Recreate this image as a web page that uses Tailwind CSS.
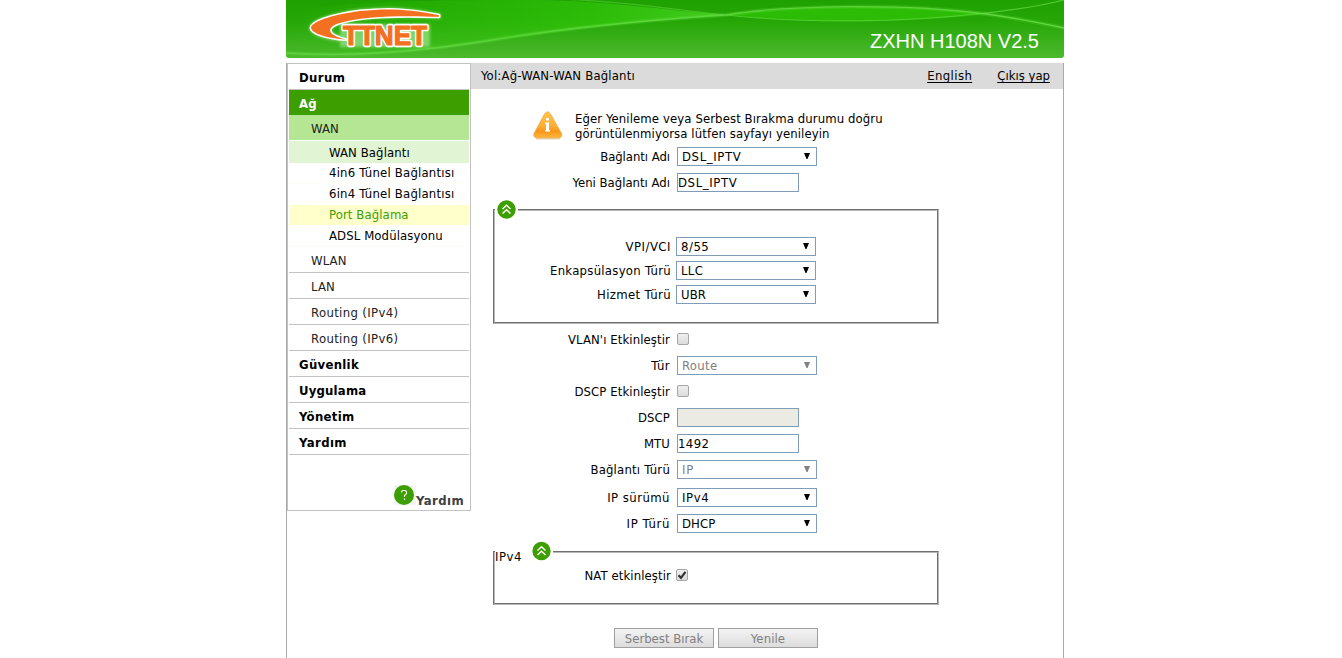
<!DOCTYPE html>
<html lang="tr">
<head>
  <meta charset="UTF-8">
  <meta name="viewport" content="width=device-width, initial-scale=1.0">
  <title>ZXHN H108N V2.5</title>
  <script src="https://cdn.jsdelivr.net/npm/@tailwindcss/browser@4"></script>
</head>
<body class="bg-white text-black font-['DejaVu_Sans_Condensed','DejaVu_Sans',sans-serif] text-[13px] leading-[15px] tracking-[0.1px] h-[658px] overflow-hidden">
  <div class="w-[778px] ml-[286px]">

    <!-- Header -->
    <header class="relative h-[58px] rounded-b-[3px] overflow-hidden">
      <svg class="absolute inset-0" width="778" height="58" viewBox="0 0 778 58">
        <defs>
          <linearGradient id="bg" x1="0" y1="0" x2="0" y2="1">
            <stop offset="0" stop-color="#1fa101"/>
            <stop offset="0.35" stop-color="#25a606"/>
            <stop offset="1" stop-color="#4cb92d"/>
          </linearGradient>
          <linearGradient id="glow" x1="0" y1="0" x2="1" y2="0">
            <stop offset="0" stop-color="#2fc808" stop-opacity="0"/>
            <stop offset="0.7" stop-color="#33cc0a" stop-opacity="0.8"/>
            <stop offset="1" stop-color="#4fda2a"/>
          </linearGradient>
          <linearGradient id="line" x1="0" y1="0" x2="1" y2="0">
            <stop offset="0" stop-color="#6be04a" stop-opacity="0.5"/>
            <stop offset="1" stop-color="#6be04a" stop-opacity="0.8"/>
          </linearGradient>
          <filter id="soft" x="-20%" y="-30%" width="140%" height="160%"><feGaussianBlur stdDeviation="1.6"/></filter>
        </defs>
        <rect width="778" height="58" fill="url(#bg)"/>
        <path d="M0 10C80 0 180 0 250 0C320 1 380 10 440 15C330 22 260 34 200 42C130 52 60 57 0 53Z" fill="url(#glow)" opacity="0.75"/>
        <path d="M440 15C500 5 640 4 700 14C640 22 520 25 440 15Z" fill="#2fc206" opacity="0.8"/>
        <g fill="none">
          <path d="M0 53C60 57 130 52 200 41C270 29 350 21 440 15C500 5 620 3 700 14C730 18 750 22 778 28" stroke="#7cf05a" stroke-width="4" opacity="0.18"/>
          <path d="M0 53C60 57 130 52 200 41C270 29 350 21 440 15C500 5 620 3 700 14C730 18 750 22 778 28" stroke="url(#line)" stroke-width="1.3"/>
          <path d="M270 -1C340 1 390 10 440 15C520 24 620 22 690 14C730 10 755 6 778 0" stroke="url(#line)" stroke-width="1.2" opacity="0.8"/>
        </g>

        <!-- Logo -->
        <g fill="#d8ffc8" stroke="#d8ffc8" stroke-width="4" filter="url(#soft)" opacity="0.45">
          <path d="M153 15.2C120 8.500 100 8.500 74 11C44 15 25 22 25 28C26 33 38 38 58 39.6C40 34 40 27 52 23C76 15 120 15 153 16.800Z"/>
          <path d="M56 26H142V45H56Z"/>
        </g>
        <path d="M153 15.2C120 8.500 100 8.500 74 11C44 15 25 22 25 28C26 33 38 38 60 39.6C41 35 40 28 52 23.500C76 15.500 120 15.500 153 16.800Z" fill="#f37021" stroke="#fff" stroke-width="3" paint-order="stroke" stroke-linejoin="round"/>
        <g font-family="Liberation Sans, sans-serif" font-weight="bold" font-size="28" letter-spacing="0" stroke-linejoin="round">
          <text x="57" y="45" textLength="84" lengthAdjust="spacingAndGlyphs" fill="#fff" stroke="#fff" stroke-width="4.500">TTNET</text>
          <text x="57" y="45" textLength="84" lengthAdjust="spacingAndGlyphs" fill="#f37021" stroke="#f37021" stroke-width="1.200">TTNET</text>
        </g>
      </svg>
      <div class="relative flex justify-end pr-[25px] pt-[29px] font-['Liberation_Sans',sans-serif] text-[20px] leading-[24px] tracking-normal text-white">ZXHN H108N V2.5</div>
    </header>

    <div class="mt-[5px] flex h-[600px] border-x border-[#a9a9a9]">

      <!-- Menu -->
      <nav class="w-[184px] h-[448px] shrink-0 border border-[#c3c3c3] pl-px pr-px flex flex-col">
        <a class="h-[26px] pl-[10px] pt-[6px] border-b border-[#c3c3c3] font-bold tracking-[0.4px]">Durum</a>
        <a class="h-[25px] pl-[10px] pt-[6px] bg-[#3d9e00] text-white font-bold">Ağ</a>
        <a class="h-[25px] pl-[22px] pt-[6px] bg-[#b5e693] text-[#222]">WAN</a>
        <a class="mt-px h-[22px] pl-[40px] pt-[4px] bg-[#e1f4d4]">WAN Bağlantı</a>
        <a class="h-[21px] pl-[40px] pt-[2px] border-b border-[#fdfdf3] tracking-[0.2px]">4in6 Tünel Bağlantısı</a>
        <a class="h-[21px] pl-[40px] pt-[2px] tracking-[0.2px]">6in4 Tünel Bağlantısı</a>
        <a class="h-[20px] pl-[40px] pt-[2px] bg-[#ffffcc] text-[#3d9e00]">Port Bağlama</a>
        <a class="h-[22px] pl-[40px] pt-[3px] border-b border-[#fdfdf3]">ADSL Modülasyonu</a>
        <a class="h-[26px] pl-[22px] pt-[6px] border-b border-[#c3c3c3] text-[#222]">WLAN</a>
        <a class="h-[26px] pl-[22px] pt-[6px] border-b border-[#c3c3c3] text-[#222]">LAN</a>
        <a class="h-[26px] pl-[22px] pt-[6px] border-b border-[#c3c3c3] text-[#222] tracking-[0.35px]">Routing (IPv4)</a>
        <a class="h-[26px] pl-[22px] pt-[6px] border-b border-[#c3c3c3] text-[#222] tracking-[0.35px]">Routing (IPv6)</a>
        <a class="h-[26px] pl-[10px] pt-[6px] border-b border-[#c3c3c3] font-bold tracking-[0.3px]">Güvenlik</a>
        <a class="h-[26px] pl-[10px] pt-[6px] border-b border-[#c3c3c3] font-bold tracking-[0.2px]">Uygulama</a>
        <a class="h-[26px] pl-[10px] pt-[6px] border-b border-[#c3c3c3] font-bold tracking-[0.3px]">Yönetim</a>
        <a class="h-[26px] pl-[10px] pt-[6px] border-b border-[#c3c3c3] font-bold tracking-[0.4px]">Yardım</a>
        <div class="mt-[30px] pr-[5px] flex justify-end">
          <span class="w-[22px] h-[20px] bg-[#f5f5f5]">
            <svg width="20" height="20" viewBox="0 0 20 20">
              <circle cx="10" cy="10" r="10" fill="#3d9e00"/>
              <path d="M7.500 7.500V6.500L8.500 5.500H11.500L12.500 6.500V8.500L10.500 10.500V12M10.500 13.500V15" fill="none" stroke="#fff" stroke-width="1.100"/>
            </svg>
          </span>
          <span class="pt-[8px] font-bold text-[#404040] tracking-[0.4px]">Yardım</span>
        </div>
      </nav>

      <!-- Content -->
      <main class="flex-1">
        <div class="h-[26px] pl-[10px] pr-[13px] pt-[5px] bg-[#dbdbdb] flex">
          <span class="flex-1 tracking-[0.18px]">Yol:Ağ-WAN-WAN Bağlantı</span>
          <a class="underline underline-offset-2 decoration-1 [text-decoration-skip-ink:none] mr-[25px] tracking-[0.4px]">English</a>
          <a class="underline underline-offset-2 decoration-1 [text-decoration-skip-ink:none] tracking-normal">Çıkış yap</a>
        </div>

        <div class="mt-[22px] pl-[62px] flex h-[30px]">
          <svg width="30" height="30" viewBox="0 0 30 30">
            <defs>
              <linearGradient id="warn" x1="0" y1="0" x2="0" y2="1">
                <stop offset="0" stop-color="#ffc54a"/>
                <stop offset="0.55" stop-color="#fdae33"/>
                <stop offset="0.75" stop-color="#f8961c"/>
                <stop offset="1" stop-color="#ffb53a"/>
              </linearGradient>
            </defs>
            <path d="M4 27.500H26" stroke="#e6d3bb" stroke-width="2" stroke-linecap="round"/>
            <path d="M11.500 3Q14.500 -1.500 17.500 3L28.500 22.500Q29.500 26.500 26 26.800H3.500Q0 26.500 1 22.500Z" fill="url(#warn)" stroke="#f5a030" stroke-width="0.700"/>
            <path d="M13 7H16V9.500H13ZM12 11.500H16V19H17V20.500H12V19H13V13H12Z" fill="#fff"/>
          </svg>
          <p class="ml-[12px]">Eğer Yenileme veya Serbest Bırakma durumu doğru<br>görüntülenmiyorsa lütfen sayfayı yenileyin</p>
        </div>

        <div class="mt-[6px] flex flex-col gap-[7px]">
          <div class="flex h-[19px] items-center">
            <label class="w-[199px] mr-[7px] text-right tracking-[-0.05px]">Bağlantı Adı</label>
            <div class="w-[140px] h-[19px] pl-[4px] pr-[6px] border border-[#7f9db9] flex items-center justify-between"><span class="tracking-[0.6px]">DSL_IPTV</span><svg class="mb-px" width="6" height="6"><path d="M0 0H6L3.500 6H2.500Z"/></svg></div>
          </div>
          <div class="flex h-[19px] items-center">
            <label class="w-[199px] mr-[7px] text-right tracking-normal">Yeni Bağlantı Adı</label>
            <input class="w-[122px] h-[19px] border border-[#7f9db9] tracking-[0.6px]" value="DSL_IPTV">
          </div>
        </div>

        <section class="relative mt-[17px] ml-[22px] w-[446px] h-[115px] border border-t-[#707070] border-l-[#707070] border-r-[#b8b8b8] border-b-[#b8b8b8]">
          <div class="h-[113px] pt-[26px] border border-t-[#b8b8b8] border-l-[#b8b8b8] border-r-[#707070] border-b-[#707070] flex flex-col gap-[5px]">
            <div class="flex h-[19px] items-center">
              <label class="w-[176px] mr-[5px] text-right tracking-[0.5px]">VPI/VCI</label>
              <div class="w-[140px] h-[19px] pl-[4px] pr-[6px] border border-[#7f9db9] flex items-center justify-between"><span class="tracking-[0.5px]">8/55</span><svg class="mb-px" width="6" height="6"><path d="M0 0H6L3.500 6H2.500Z"/></svg></div>
            </div>
            <div class="flex h-[19px] items-center">
              <label class="w-[176px] mr-[5px] text-right tracking-[0.27px]">Enkapsülasyon Türü</label>
              <div class="w-[140px] h-[19px] pl-[4px] pr-[6px] border border-[#7f9db9] flex items-center justify-between"><span class="tracking-[0.3px]">LLC</span><svg class="mb-px" width="6" height="6"><path d="M0 0H6L3.500 6H2.500Z"/></svg></div>
            </div>
            <div class="flex h-[19px] items-center">
              <label class="w-[176px] mr-[5px] text-right tracking-[0.35px]">Hizmet Türü</label>
              <div class="w-[140px] h-[19px] pl-[4px] pr-[6px] border border-[#7f9db9] flex items-center justify-between"><span>UBR</span><svg class="mb-px" width="6" height="6"><path d="M0 0H6L3.500 6H2.500Z"/></svg></div>
            </div>
          </div>
          <!-- Collapse toggle on the border -->
          <div class="absolute left-px -top-[10px] w-[23px] h-[20px] pl-[2px] bg-white">
            <svg width="20" height="20" viewBox="0.5 0.5 20 20">
              <circle cx="10" cy="10" r="9.200" fill="#3d9e00"/>
              <path d="M6 9.500L10 5.800L14 9.500M6 14L10 10.300L14 14" fill="none" stroke="#fff" stroke-width="1.500"/>
            </svg>
          </div>
        </section>

        <div class="mt-[6px] flex flex-col gap-[7px]">
          <div class="flex h-[19px] items-center">
            <label class="w-[199px] mr-[7px] text-right">VLAN'ı Etkinleştir</label>
            <span class="w-[12px] h-[12px] mb-[2px] rounded-[2px] border border-[#a6a6a6] bg-linear-to-b from-[#eeeeee] to-[#dcdcdc]"></span>
          </div>
          <div class="flex h-[19px] items-center">
            <label class="w-[199px] mr-[7px] text-right tracking-[0.4px]">Tür</label>
            <div class="w-[140px] h-[19px] pl-[4px] pr-[6px] border border-[#7f9db9] text-[#808080] flex items-center justify-between"><span class="tracking-[0.3px]">Route</span><svg class="mb-px" width="6" height="6" fill="#808080"><path d="M0 0H6L3.500 6H2.500Z"/></svg></div>
          </div>
          <div class="flex h-[19px] items-center">
            <label class="w-[199px] mr-[7px] text-right">DSCP Etkinleştir</label>
            <span class="w-[12px] h-[12px] mb-[2px] rounded-[2px] border border-[#a6a6a6] bg-linear-to-b from-[#eeeeee] to-[#dcdcdc]"></span>
          </div>
          <div class="flex h-[19px] items-center">
            <label class="w-[199px] mr-[7px] text-right">DSCP</label>
            <input class="w-[122px] h-[19px] border border-[#7f9db9] bg-[#ebebe4]" disabled>
          </div>
          <div class="flex h-[19px] items-center">
            <label class="w-[199px] mr-[7px] text-right">MTU</label>
            <input class="w-[122px] h-[19px] border border-[#7f9db9] tracking-[0.4px]" value="1492">
          </div>
          <div class="flex h-[19px] items-center">
            <label class="w-[199px] mr-[7px] text-right tracking-[0.2px]">Bağlantı Türü</label>
            <div class="w-[140px] h-[19px] pl-[4px] pr-[6px] border border-[#7f9db9] text-[#808080] flex items-center justify-between"><span class="tracking-[0.8px]">IP</span><svg class="mb-px" width="6" height="6" fill="#808080"><path d="M0 0H6L3.500 6H2.500Z"/></svg></div>
          </div>
          <div class="mt-[2px] flex h-[19px] items-center">
            <label class="w-[199px] mr-[7px] text-right tracking-[0.45px]">IP sürümü</label>
            <div class="w-[140px] h-[19px] pl-[4px] pr-[6px] border border-[#7f9db9] flex items-center justify-between"><span class="tracking-[0.6px]">IPv4</span><svg class="mb-px" width="6" height="6"><path d="M0 0H6L3.500 6H2.500Z"/></svg></div>
          </div>
          <div class="flex h-[19px] items-center">
            <label class="w-[199px] mr-[7px] text-right tracking-[0.6px]">IP Türü</label>
            <div class="w-[140px] h-[19px] pl-[4px] pr-[6px] border border-[#7f9db9] flex items-center justify-between"><span>DHCP</span><svg class="mb-px" width="6" height="6"><path d="M0 0H6L3.500 6H2.500Z"/></svg></div>
          </div>
        </div>

        <section class="relative mt-[18px] ml-[22px] w-[446px] h-[54px] border border-t-[#707070] border-l-[#707070] border-r-[#b8b8b8] border-b-[#b8b8b8]">
          <div class="h-[52px] pt-[13px] border border-t-[#b8b8b8] border-l-[#b8b8b8] border-r-[#707070] border-b-[#707070]">
            <div class="flex h-[19px] items-center">
              <label class="w-[176px] mr-[5px] text-right">NAT etkinleştir</label>
              <span class="w-[12px] h-[12px] mb-[2px] rounded-[2px] border border-[#a6a6a6] bg-linear-to-b from-[#eeeeee] to-[#dcdcdc]">
                <svg width="10" height="10" viewBox="0 0 10 10"><path d="M1.500 5.300L4 7.800L8.500 1.800" fill="none" stroke="#333" stroke-width="2.200"/></svg>
              </span>
            </div>
          </div>
          <div class="absolute left-px -top-[11px] w-[58px] h-[20px] bg-white flex justify-between pr-px">
            <span class="pt-[8px] tracking-[0.5px]">IPv4</span>
            <svg width="20" height="20" viewBox="0.5 0 20 20">
              <circle cx="10" cy="10" r="9.200" fill="#3d9e00"/>
              <path d="M6 9.500L10 5.800L14 9.500M6 14L10 10.300L14 14" fill="none" stroke="#fff" stroke-width="1.500"/>
            </svg>
          </div>
        </section>

        <div class="mt-[23px] ml-[143px] flex gap-[4px]">
          <button class="w-[100px] h-[20px] border border-[#a0a0a0] bg-linear-to-b from-[#f4f4f4] to-[#dcdcdc] text-[#808080] leading-[19px] tracking-normal">Serbest Bırak</button>
          <button class="w-[100px] h-[20px] border border-[#a0a0a0] bg-linear-to-b from-[#f4f4f4] to-[#dcdcdc] text-[#808080] leading-[19px]">Yenile</button>
        </div>
      </main>
    </div>
  </div>
</body>
</html>
